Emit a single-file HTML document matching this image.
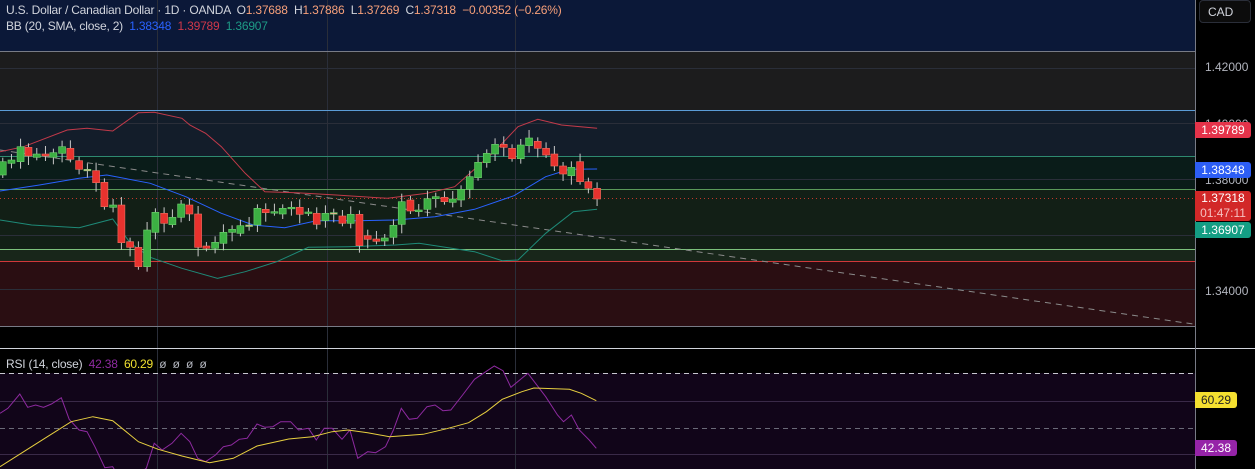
<!DOCTYPE html>
<html><head><meta charset="utf-8"><style>
html,body{margin:0;padding:0;background:#000;width:1255px;height:469px;overflow:hidden;font-family:"Liberation Sans",sans-serif}
svg{position:absolute;left:0;top:0}
.t{position:absolute;font-size:12px;color:#d1d4dc;white-space:nowrap;letter-spacing:-0.2px}
.lab{position:absolute;left:1195px;width:56px;height:16px;font-size:12px;color:#fff;text-align:center;line-height:16px;border-radius:0 3px 3px 0}
.ax{position:absolute;left:1205px;font-size:12px;color:#b2b5be}
</style></head><body>
<svg id="s" width="1255" height="469" xmlns="http://www.w3.org/2000/svg">
<rect x="0" y="0" width="1195" height="51" fill="#0b1838"/>
<rect x="0" y="51" width="1195" height="59" fill="#1c1c1d"/>
<rect x="0" y="110" width="1195" height="46" fill="#131d2a"/>
<rect x="0" y="156" width="1195" height="33" fill="#0a1c19"/>
<rect x="0" y="189" width="1195" height="60" fill="#121f16"/>
<rect x="0" y="249" width="1195" height="12" fill="#18261a"/>
<rect x="0" y="261" width="1195" height="65" fill="#2a0e12"/>
<rect x="0" y="373" width="1195" height="96" fill="#110519"/>
<g stroke="#2a2e39" stroke-width="1">
<line x1="157.5" y1="0" x2="157.5" y2="469"/><line x1="327.5" y1="0" x2="327.5" y2="469"/><line x1="515.5" y1="0" x2="515.5" y2="469"/>
<line x1="0" y1="68.5" x2="1195" y2="68.5"/><line x1="0" y1="123.5" x2="1195" y2="123.5"/><line x1="0" y1="179.5" x2="1195" y2="179.5"/><line x1="0" y1="235.5" x2="1195" y2="235.5"/><line x1="0" y1="289.5" x2="1195" y2="289.5"/>
<line x1="0" y1="401.5" x2="1195" y2="401.5" stroke="#3a2a48"/><line x1="0" y1="454.5" x2="1195" y2="454.5" stroke="#3a2a48"/>
</g>
<line x1="0" y1="51.5" x2="1195" y2="51.5" stroke="#787b86"/>
<line x1="0" y1="110.5" x2="1195" y2="110.5" stroke="#5b9cd6"/>
<line x1="0" y1="156.5" x2="1195" y2="156.5" stroke="#2e8a70"/>
<line x1="0" y1="189.5" x2="1195" y2="189.5" stroke="#5a9a5a"/>
<line x1="0" y1="249.5" x2="1195" y2="249.5" stroke="#7cc07c"/>
<line x1="0" y1="261.5" x2="1195" y2="261.5" stroke="#d0383a"/>
<line x1="0" y1="326.5" x2="1195" y2="326.5" stroke="#787b86"/>
<line x1="0" y1="348.5" x2="1255" y2="348.5" stroke="#d1d4dc"/>
<line x1="1195.5" y1="0" x2="1195.5" y2="469" stroke="#787b86"/>
<line x1="0" y1="373.5" x2="1195" y2="373.5" stroke="#c8c8d0" stroke-dasharray="5,4"/>
<line x1="0" y1="428.5" x2="1195" y2="428.5" stroke="#6a6a78" stroke-dasharray="5,4"/>
<line x1="0" y1="198.5" x2="1195" y2="198.5" stroke="#c0392b" stroke-dasharray="1,3"/>
<line x1="0" y1="150" x2="1193" y2="324" stroke="#8a8a8a" stroke-dasharray="6,5"/>
<g id="g"></g>
</svg>
<div class="t" style="left:6px;top:3px">U.S. Dollar / Canadian Dollar · 1D · OANDA &nbsp;O<span style="color:#f7a07a">1.37688</span> &nbsp;H<span style="color:#f7a07a">1.37886</span> &nbsp;L<span style="color:#f7a07a">1.37269</span> &nbsp;C<span style="color:#f7a07a">1.37318</span> &nbsp;<span style="color:#f7a07a">−0.00352 (−0.26%)</span></div>
<div class="t" style="left:6px;top:19px">BB (20, SMA, close, 2) &nbsp;<span style="color:#2962ff">1.38348</span> &nbsp;<span style="color:#d0384a">1.39789</span> &nbsp;<span style="color:#1e9a86">1.36907</span></div>
<div class="t" style="left:6px;top:357px">RSI (14, close) &nbsp;<span style="color:#8e2aa0">42.38</span> &nbsp;<span style="color:#f0e030">60.29</span> &nbsp;<span style="color:#b2b5be">ø &nbsp;ø &nbsp;ø &nbsp;ø</span></div>
<div style="position:absolute;left:1199px;top:0;width:52px;height:23px;border:1px solid #2a2e39;border-radius:4px;background:#0c0c0c;color:#d1d4dc;font-size:12px;line-height:23px;padding-left:8px;box-sizing:border-box">CAD</div>
<div class="ax" style="top:60px">1.42000</div>
<div class="ax" style="top:117px">1.40000</div>
<div class="ax" style="top:173px">1.38000</div>
<div class="ax" style="top:226px">1.36000</div>
<div class="ax" style="top:284px">1.34000</div>
<div class="lab" style="top:122px;background:#e5334a">1.39789</div>
<div class="lab" style="top:162px;background:#2d5ef5">1.38348</div>
<div class="lab" style="top:191px;height:30px;line-height:15px;background:#d22828">1.37318<br><span style="color:#f5c0c0">01:47:11</span></div>
<div class="lab" style="top:222px;background:#149e84">1.36907</div>
<div class="lab" style="top:392px;width:42px;background:#f5e030;color:#222">60.29</div>
<div class="lab" style="top:440px;width:42px;background:#9624a8">42.38</div>
<script>
var NS="http://www.w3.org/2000/svg",g=document.getElementById("g"),SX=2.529;
function pl(pts,col,y0,w){var p=[];for(var i=0;i<pts.length;i+=2)p.push((pts[i]/SX).toFixed(1)+","+(y0+pts[i+1]/3).toFixed(1));var e=document.createElementNS(NS,"polyline");e.setAttribute("points",p.join(" "));e.setAttribute("fill","none");e.setAttribute("stroke",col);e.setAttribute("stroke-width",w||1);g.appendChild(e);}
pl([0,455,60,440,170,390,220,385,285,393,350,338,390,337,460,355,480,375,520,400,560,440,620,520,670,575,750,578,850,585,980,595,1080,580,1150,560,1250,455,1310,380,1360,358,1420,375,1510,385],"#c23a4a",0);
pl([0,573,100,555,200,535,270,525,380,550,470,590,560,640,640,675,720,683,800,662,900,662,1000,660,1100,650,1200,628,1300,587,1380,530,1440,508,1510,507],"#2962ff",0);
pl([0,660,80,675,200,683,285,657,330,730,380,772,460,805,550,835,620,815,700,785,780,742,880,740,1000,735,1060,730,1200,755,1270,782,1310,780,1380,700,1450,635,1510,628],"#1e8a78",0);
var c=[[7,485,525,1],[29,480,490,1],[52,440,485,1],[72,442,468,0],[93,462,472,1],[115,462,468,0],[135,458,472,1],[157,440,460,1],[178,445,478,0],[200,482,508,0],[221,508,512,2],[243,512,548,0],[264,547,620,0],[286,615,622,1],[307,615,728,0],[329,725,742,0],[350,742,800,0],[372,690,800,1],[393,637,697,1],[415,640,670,0],[436,652,674,1],[458,612,652,1],[479,615,642,0],[501,642,742,0],[522,738,745,0],[544,727,745,1],[565,697,730,1],[587,688,697,1],[608,677,700,1],[630,675,677,2],[651,625,675,1],[672,628,638,0],[694,635,638,1],[715,625,642,1],[737,622,626,1],[758,622,643,0],[780,636,639,1],[801,640,673,0],[823,640,662,1],[844,638,640,2],[866,648,670,0],[887,643,670,1],[909,643,737,0],[930,707,718,0],[952,717,724,0],[973,714,723,1],[995,676,712,1],[1016,605,673,1],[1038,600,633,0],[1059,630,635,1],[1081,596,628,1],[1102,590,596,1],[1124,592,605,0],[1145,597,607,1],[1166,568,600,1],[1188,530,568,1],[1209,487,533,1],[1231,460,488,1],[1252,433,462,1],[1274,433,442,0],[1295,445,476,0],[1317,435,476,1],[1338,414,437,1],[1360,424,445,0],[1381,445,465,0],[1402,462,498,0],[1424,498,522,0],[1445,502,527,1],[1467,485,545,0],[1488,545,565,0],[1510,565,597,0]];
c.forEach(function(k,i){var x=k[0]/SX,t=k[1]/3,b=k[2]/3,col=k[3]==1?"#3cb043":(k[3]==0?"#e8322e":"#f0b090");var w=document.createElementNS(NS,"line");w.setAttribute("x1",x);w.setAttribute("x2",x);w.setAttribute("y1",t-4-(i%3)*2);w.setAttribute("y2",b+3+(i%4)*2);w.setAttribute("stroke","#c8c8c8");w.setAttribute("stroke-width",1);g.appendChild(w);var r=document.createElementNS(NS,"rect");r.setAttribute("x",x-3.5);r.setAttribute("y",t);r.setAttribute("width",7);r.setAttribute("height",Math.max(1.5,b-t));r.setAttribute("fill",col);r.setAttribute("stroke",k[3]==0?"#f07060":"#70d070");r.setAttribute("stroke-width",0.6);g.appendChild(r);});
pl([0,250,20,235,50,192,70,232,90,225,110,232,130,222,155,203,175,268,200,300,220,305,240,350,265,413,285,410,300,440,340,440,370,415,390,340,410,360,435,340,458,310,480,335,500,385,520,395,545,375,565,350,585,345,605,328,625,325,650,282,670,292,690,290,710,275,735,275,755,300,780,295,800,330,820,295,840,295,865,328,885,300,905,385,930,365,950,368,975,350,995,300,1015,235,1035,268,1055,265,1080,230,1100,225,1120,242,1140,240,1170,195,1200,148,1250,108,1272,122,1292,172,1335,130,1380,200,1410,255,1425,275,1445,255,1465,300,1490,330,1508,355],"#8e2aa0",330);
pl([0,410,60,365,120,320,180,275,235,260,285,272,350,335,400,358,460,378,530,398,590,385,650,348,730,327,790,320,840,305,880,300,930,308,985,320,1070,313,1130,296,1185,278,1230,245,1270,208,1320,185,1350,174,1440,178,1470,190,1508,212],"#e8d040",330);
</script>
</body></html>
